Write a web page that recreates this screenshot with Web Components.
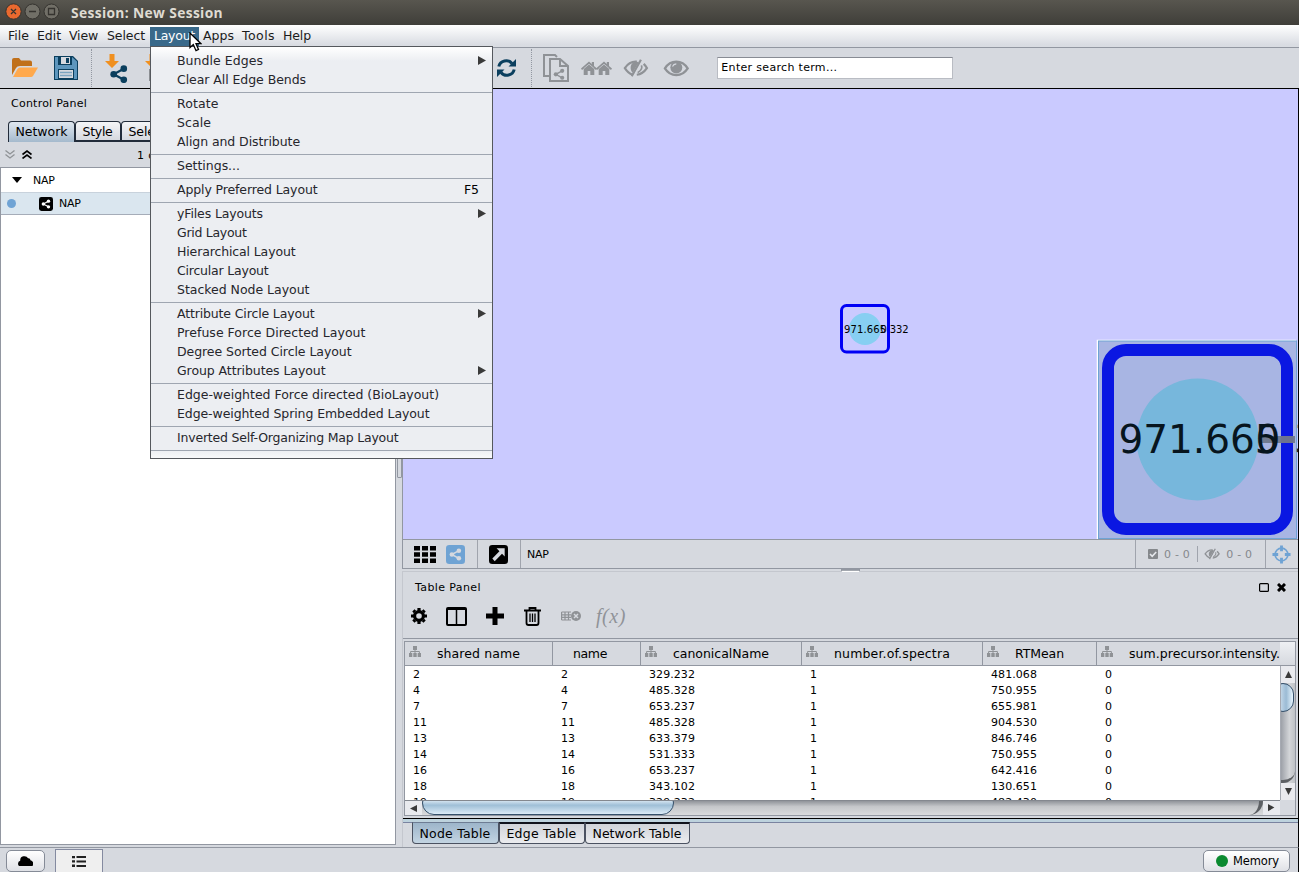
<!DOCTYPE html>
<html lang="en">
<head>
<meta charset="utf-8">
<title>Session: New Session</title>
<style>
html,body{margin:0;height:100%;overflow:hidden;background:#d6d9df}
body{font-family:"DejaVu Sans",sans-serif;font-size:12.5px;color:#000}
</style>
</head>
<body>
<session-app></session-app>
<script>
const define = (name, html, after) => customElements.define(name, class extends HTMLElement {
  connectedCallback() {
    if (!this.shadowRoot) {
      const t = document.createElement('template');
      t.innerHTML = typeof html === 'function' ? html(this) : html;
      this.attachShadow({mode: 'open'}).append(t.content.cloneNode(true));
    }
    if (after) after(this);
  }
});

/* Text label; w is the width its glyph run is spaced to. */
define('ui-text', '<style>:host{display:inline-block;white-space:pre;flex:none}span{display:inline-block}</style><span><slot></slot></span>', el => {
  const w = parseFloat(el.getAttribute('w'));
  const n = el.textContent.length || parseFloat(el.getAttribute('n'));
  const s = el.shadowRoot.querySelector('span');
  if (!w || !n) return;
  s.style.letterSpacing = (w - s.getBoundingClientRect().width) / n + 'px';
});

const SHARE = '<circle cx="4" cy="10" r="3.6"/><circle cx="15" cy="4" r="3.6"/><circle cx="15" cy="16" r="3.6"/><path d="M15 4L4 10l11 6" fill="none" stroke="currentColor" stroke-width="2.4"/>';
const ICONS = {
  folder: [26,20,'<path fill="#c0701a" d="M0 17V2Q0 0 2 0H7L9 2.500H18Q20 2.500 20 4.500V8H8Q5 8 4 10z"/><path fill="#ffa94d" d="M1 19L5.500 11Q6.500 9.500 8 9.500H26L21 18Q20.300 19 19 19z"/>'],
  save: [24,24,'<path fill="#0b3f5e" d="M0 0H19L24 5V24H0z"/><path fill="#5d96bd" d="M1 1H4V9H18V1L23 5.500V23H20V13H4V23H1z"/><path fill="#d6d9df" d="M7 1H16V8H7z"/><path fill="#0b3f5e" d="M12 2H15V7H12z"/><path fill="#d6d9df" d="M5 14H19V22H5z"/><path stroke="#7ba4c0" stroke-width="1.500" d="M6 16.500H18M6 19.500H18"/>'],
  import: [24,30,'<path fill="#f09020" d="M4.500 1H9.500V8H14L7 15L0 8H4.500z"/><g color="#0b3f5e" fill="#0b3f5e" transform="translate(5 12) scale(.92)">'+SHARE+'</g>'],
  table: [24,30,'<path fill="#f09020" d="M4.500 1H9.500V8H14L7 15L0 8H4.500z"/><path fill="#8b8e92" d="M4 16H20V28H4z"/>'],
  refresh: [19,18,'<path fill="none" stroke="#0b3f5e" stroke-width="3" d="M1.800 7.500A7.500 7.300 0 0 1 15 4.500M17.200 10.500A7.500 7.300 0 0 1 4 13.500"/><path fill="#0b3f5e" d="M19 0V7.500H11.500zM0 18V10.500H7.500z"/>'],
  pages: [26,28,'<g fill="#d6d9df" stroke="#8f9296" stroke-width="2"><path d="M6 22H1V1H12L14 3"/><path d="M7 5H17L25 12V27H7z"/><path d="M17 5V12H25" fill="none"/></g><g color="#8f9296" fill="#8f9296" transform="translate(10.500 14.500) scale(.58)">'+SHARE+'</g>'],
  homes: [31,14,'<g fill="#8f9296"><path id="h" d="M0 7.500L8 .5L10.800 3V1H13V5L16 7.500L15 9L13.300 7.700V14H9.300V10H6.700V14H2.700V7.700L1 9z"/><path d="M15 7.500L23 .5L25.800 3V1H28V5L31 7.500L30 9L28.300 7.700V14H24.300V10H21.700V14H17.700V7.700L16 9z"/></g><path d="M2.700 7.700L8 3.200L13.300 7.700M17.700 7.700L23 3.200L28.300 7.700" fill="none" stroke="#d6d9df" stroke-width=".7"/>'],
  eye: [28,24,'<path fill="none" stroke="#8f9296" stroke-width="2.400" d="M2 12C8 2.500 20 2.500 26 12C20 21.500 8 21.500 2 12z"/><circle cx="14" cy="11" r="6.300" fill="#8f9296"/><path d="M10 10Q11 7.500 14 7.300" fill="none" stroke="#d6d9df" stroke-width="1.200"/>'],
  eyeoff: [28,24,'<path fill="none" stroke="#8f9296" stroke-width="2.400" d="M15 5C9 4.500 5 7.500 2 12Q6 18 10 19M22.500 7.500Q24.500 9.500 26 12Q21.500 18.500 15 19.300"/><path fill="#8f9296" d="M15 5C7 5 7 15 10.500 17L17 6z"/><path stroke="#8f9296" stroke-width="2.400" d="M19.500 3L9.500 21"/><path stroke="#d6d9df" stroke-width="1.200" d="M21.500 4L12 21"/><path d="M20 9Q22 13 16 17" fill="none" stroke="#8f9296" stroke-width="1.800"/>'],
  grid: [22,17,'<path d="M0 0h6v4.600H0zM8 0h6v4.600H8zM16 0h6v4.600h-6zM0 6.200h6v4.600H0zM8 6.200h6v4.600H8zM16 6.200h6v4.600h-6zM0 12.400h6V17H0zM8 12.400h6V17H8zM16 12.400h6V17h-6z"/>'],
  sharebox: [20,20,'<rect width="20" height="20" rx="3.500"/><g color="var(--hole,#d6d9df)" fill="var(--hole,#d6d9df)" transform="translate(3.500 3.300) scale(.67)">'+SHARE+'</g>'],
  detach: [20,20,'<rect width="20" height="20" rx="3.500"/><path fill="#d6d9df" d="M8 3.500H16.500V12L13.700 9.200L6 17L3.500 14.300L11 6.500z"/>'],
  gear: [16,16,'<circle cx="8" cy="8" r="4.400" fill="none" stroke="#000" stroke-width="3.200"/><path stroke="#000" stroke-width="3.200" d="M8 0V3M8 13V16M0 8H3M13 8H16M2.400 2.400L4 4M12 12L13.600 13.600M2.400 13.600L4 12M12 4L13.600 2.400"/>'],
  cols: [21,19,'<rect x="1" y="1" width="19" height="17" rx="1" fill="none" stroke="#000" stroke-width="2"/><path stroke="#000" stroke-width="1.500" d="M1 2.200H20M10.500 2V18"/>'],
  plus: [18,18,'<path d="M6.500 0H11.500V6.500H18V11.500H11.500V18H6.500V11.500H0V6.500H6.500z"/>'],
  trash: [17,19,'<path fill="none" stroke="#000" stroke-width="1.800" d="M0 3.500H17M5.500 3V1H11.500V3M2.500 4V16Q2.500 18 4.500 18H12.500Q14.500 18 14.500 16V4"/><path stroke="#000" stroke-width="1.300" d="M6 6.500V15M8.500 6.500V15M11 6.500V15"/>'],
  deltab: [20,10,'<path fill="none" stroke="#8f9296" stroke-width="1.200" d="M.6 1H10M.6 3.800H10M.6 6.300H10M.6 9H10M.6 1V9M4 1V9M7.500 1V9"/><circle cx="15" cy="5" r="5" fill="#8f9296"/><path stroke="#d6d9df" stroke-width="1.500" d="M13 3L17 7M17 3L13 7"/>'],
  tree: [12,11,'<path fill="#8f9296" d="M4 0H8V4H4zM0 7H3.300V11H0zM4.300 7H7.700V11H4.300zM8.700 7H12V11H8.700z"/><path fill="none" stroke="#8f9296" d="M6 4V7M1.600 7V5.500H10.400V7"/>'],
  check: [10,10,'<rect width="10" height="10" rx="1" fill="#85888c"/><path d="M2 5L4.200 7.300L8.200 3" fill="none" stroke="#e6e8ec" stroke-width="1.600"/>'],
  target: [20,20,'<circle cx="10" cy="10" r="6.700" fill="none" stroke="#6fa3d4" stroke-width="1.800"/><path stroke="#6fa3d4" stroke-width="3" d="M10 .5V6.500M10 13.500V19.500M.5 10H6.500M13.500 10H19.500"/>'],
  max: [10,9,'<rect x=".6" y=".6" width="8.800" height="7.800" rx="1" fill="none" stroke="#000" stroke-width="1.200"/>'],
  close: [9,9,'<path stroke="#000" stroke-width="3" d="M1 1L8 8M8 1L1 8"/>'],
  cloud: [16,11,'<path d="M4 11Q0 11 0 8Q0 5.500 2.300 5Q2 1 5.500 .3Q9 -.4 10.500 2.300Q12.800 2 13 4.500Q16 5.500 16 8Q16 11 13 11z"/>'],
  list: [14,11,'<path fill="#222" d="M0 0H3V2.300H0zM0 4.300H3V6.600H0zM0 8.600H3V11H0zM4.500 0H14V2H4.500zM4.500 4.500H14V6.500H4.500zM4.500 9H14V11H4.500z"/>'],
  dn2: [10,9,'<path fill="none" stroke="#8f9296" stroke-width="1.300" d="M.5 .5L5 4L9.500 .5M.5 4.500L5 8L9.500 4.500"/>'],
  up2: [10,9,'<path fill="none" stroke="#000" stroke-width="1.600" d="M.5 4.500L5 1L9.500 4.500M.5 8.500L5 5L9.500 8.500"/>'],
  down: [10,6,'<path d="M0 0H10L5 6z"/>'],
  right: [8,9,'<path fill="#3a3a3a" d="M0 0L8 4.500L0 9z"/>'],
  left: [7,7,'<path fill="#3a3a3a" d="M7 0L0 3.500L7 7z"/>'],
  upt: [7,7,'<path fill="#3a3a3a" d="M0 7L3.500 0L7 7z"/>'],
  dnt: [7,7,'<path fill="#3a3a3a" d="M0 0L3.500 7L7 0z"/>'],
  cursor: [13,20,'<path fill="#fff" stroke="#000" stroke-width="1.300" d="M1 1V15.500L4.300 12.500L7 18.700L9.500 17.500L7 11.700H12z"/>']
};
define('ui-icon', el => {
  const [w, h, body] = ICONS[el.getAttribute('name')];
  const k = parseFloat(el.getAttribute('scale') || 1);
  return `<style>:host{display:block;flex:none;width:${w*k}px;height:${h*k}px}svg{display:block}</style><svg width="${w*k}" height="${h*k}" viewBox="0 0 ${w} ${h}" fill="currentColor">${body}</svg>`;
});

define('title-bar', `<style>
:host{display:flex;height:25px;align-items:center;background:linear-gradient(#58564f,#3f3e39);box-sizing:border-box;padding:0 5px;color:#dfdbd2;font:bold 13.800px "Open Sans","Noto Sans",sans-serif}
svg{display:block;flex:none}ui-text{margin-left:11px;padding-bottom:1px}</style>
<svg width="55" height="19"><g stroke="#35332f"><circle cx="8.500" cy="8.500" r="7.700" fill="#e9692f"/><circle cx="27.500" cy="8.500" r="7.500" fill="#716f67"/><circle cx="46.500" cy="8.500" r="7.500" fill="#716f67"/></g><path d="M6 6L11 11M11 6L6 11M24 8.500H31M43.500 5.500H49.500V11.500H43.500z" fill="none" stroke="#35332f" stroke-width="1.300"/></svg>
<ui-text w="152" n="20"><slot></slot></ui-text>`);

define('menu-bar', `<style>
:host{display:grid;grid-template-columns:29px 32px 38px 47px 49px 39px 41px 40px;padding:2px 0 1px 4px;height:23px;box-sizing:border-box;background:linear-gradient(#fff,#d9dce2 90%);border-bottom:1px solid #9297a1;line-height:17px;color:#1b1b1b}
</style><slot></slot>`);
define('menu-title', `<style>:host{padding-left:4px;white-space:nowrap}:host([active]){background:#39698a;color:#fff}</style><slot></slot>`);

define('main-toolbar', `<style>
:host{display:flex;height:41px;box-sizing:border-box;align-items:center;border-bottom:1px solid #000;padding-left:12px}
.sep{height:38px;border-left:1px dotted #9297a1}
.f{box-sizing:border-box;width:236px;height:22px;border:1px solid #b9bcc3;border-top:1.500px solid #888c94;background:#fff;margin-left:28px;padding-left:3px;font-size:11px;line-height:20px}
</style>
<ui-icon name="folder"></ui-icon><ui-icon name="save" style="margin-left:16px"></ui-icon><div class="sep" style="margin-left:13px"></div>
<ui-icon name="import" style="margin-left:13px"></ui-icon><ui-icon name="table" style="margin-left:16px"></ui-icon>
<ui-icon name="refresh" style="margin-left:328px"></ui-icon><div class="sep" style="margin-left:15px"></div>
<ui-icon name="pages" style="margin-left:11px"></ui-icon><ui-icon name="homes" style="margin-left:12px"></ui-icon>
<ui-icon name="eyeoff" scale=".92" style="margin-left:11px"></ui-icon><ui-icon name="eye" scale=".95" style="margin-left:14px"></ui-icon>
<div class="f"><ui-text w="116">Enter search term...</ui-text></div>`);

define('ui-tab', `<style>
:host{display:block;box-sizing:border-box;height:21px;border:1px solid #222c3a;border-bottom-width:2px;border-radius:4px 4px 0 0;background:linear-gradient(#f4f5f7,#d6d9df);padding-left:6.500px;line-height:20px;white-space:nowrap;flex:none}
:host([active]){border-bottom:0;background:linear-gradient(#dfe7ef,#a5bacd);height:21px}
:host([low]){border:1px solid #4b5261;border-top:2px solid #10121c;border-radius:0 0 4px 4px;background:linear-gradient(#d0d3d9,#ebecef);height:22px}
:host([low][active]){background:linear-gradient(#9db5ca,#c3d4e2);border-top:1px solid #6e7d94;line-height:22px}
</style><slot></slot>`);

define('control-panel', `<style>
:host{display:flex;flex-direction:column;width:396px;box-sizing:border-box}
.h{height:32px;line-height:29px;padding-left:11px;font-size:11px}
.t{display:flex;padding-left:8px;height:21px}
.b{display:flex;height:25px;align-items:center;font-size:11px;padding-left:5px}
.b ui-text{padding-top:1px}
.tree{flex:1;border:1px solid #9297a1;background:#fff;font-size:11px;margin-bottom:2px}
.r{display:flex;align-items:center;height:24px}
.r.s{height:23px;box-sizing:border-box;background:#dae6ef;border-bottom:1px solid #a5acb8;border-top:1px solid #c8d2dc}
.dot{width:9px;height:9px;border-radius:5px;background:#6fa3d4;margin:0 23px 0 6px}
</style>
<div class="h"><ui-text w="76">Control Panel</ui-text></div>
<div class="t"><ui-tab active style="width:67px"><ui-text w="52">Network</ui-text></ui-tab><ui-tab style="width:46px"><ui-text w="30">Style</ui-text></ui-tab><ui-tab style="width:53px"><ui-text w="38">Select</ui-text></ui-tab></div>
<div class="b"><ui-icon name="dn2"></ui-icon><ui-icon name="up2" style="margin-left:7px"></ui-icon><ui-text w="140" style="margin-left:105px">1 of 1 Network selected</ui-text></div>
<div class="tree"><div class="r"><ui-icon name="down" style="margin-left:11px"></ui-icon><ui-text w="21.500" style="margin-left:11px">NAP</ui-text></div>
<div class="r s"><div class="dot"></div><ui-icon name="sharebox" scale=".7" style="--hole:#fff"></ui-icon><ui-text w="21.500" style="margin-left:6px">NAP</ui-text></div></div>`);

define('network-view', `<style>
:host{display:block;height:450px;position:relative;background:#cacaff;overflow:hidden;font-size:10px}
svg{position:absolute;display:block}
.node{left:422px;top:211px}.eye{left:693px;top:250px}
</style>
<svg class="node" width="90" height="60" font-family="DejaVu Sans" font-size="10"><circle cx="40" cy="29" r="16" fill="#87cff2"/><rect x="16.500" y="5.500" width="47" height="46.500" rx="5" fill="none" stroke="#0000f5" stroke-width="3"/><text x="19" y="32.500" textLength="42">971.665</text><text x="55.500" y="32.500" textLength="28">0.332</text><path stroke="#0000f5" stroke-width="3" d="M63.500 22V36"/></svg>
<svg class="eye" width="202" height="200" font-family="DejaVu Sans" font-size="39"><path d="M1.500 200V1.500H200" fill="none" stroke="#fff" stroke-width="1.500"/><rect x="2.500" y="2" width="198" height="197.500" fill="#a8b5e3" stroke="#6fa3d4"/><circle cx="101.500" cy="100.500" r="61" fill="#77b7dc"/><path stroke="#727c92" stroke-width="7" d="M163 100.500H199"/><g fill="#07151e"><text x="22.500" y="114" textLength="161">971.665</text><text x="159.500" y="114" textLength="114">0.332</text></g><rect x="12" y="11" width="179" height="179" rx="18" fill="none" stroke="#0a17e2" stroke-width="12"/><path stroke="#6d7390" stroke-width="7" d="M185 100.500H197"/></svg>`);

define('view-status', `<style>
:host{display:flex;box-sizing:border-box;height:30px;border:1px solid #9297a1;border-right:0;align-items:stretch;font-size:11px}
div{display:flex;align-items:center;box-sizing:border-box;border-right:1px solid #a0a4ad}
</style>
<div style="width:75px;padding-left:11px"><ui-icon name="grid"></ui-icon><ui-icon name="sharebox" scale=".95" style="margin-left:10px;color:#6fa3d4"></ui-icon></div>
<div style="width:43px;padding-left:11px"><ui-icon name="detach" scale=".95"></ui-icon></div>
<div style="flex:1;padding-left:6px"><ui-text w="21.500">NAP</ui-text></div>
<div style="width:130px;padding-left:12px;color:#85888c"><ui-icon name="check"></ui-icon><ui-text w="26" style="margin-left:6px">0 - 0</ui-text><span style="height:16px;border-left:1px solid #a0a4ad;margin:0 6px 0 7px"></span><ui-icon name="eyeoff" scale=".58"></ui-icon><ui-text w="26" style="margin-left:6px">0 - 0</ui-text></div>
<div style="width:32px;padding-left:6px;border:0"><ui-icon name="target" scale=".95"></ui-icon></div>`);

const COLS = [['shared name',148,83,1],['name',88,34,0],['canonicalName',161,96,1],['number.of.spectra',181,116,1],['RTMean',114,49,1],['sum.precursor.intensity.',183,151,1]];
const ROWS = [['2','2','329.232','1','481.068','0'],['4','4','485.328','1','750.955','0'],['7','7','653.237','1','655.981','0'],['11','11','485.328','1','904.530','0'],['13','13','633.379','1','846.746','0'],['14','14','531.333','1','750.955','0'],['16','16','653.237','1','642.416','0'],['18','18','343.102','1','130.651','0'],['19','19','329.232','1','482.430','0']];
define('data-table', `<style>
:host{display:grid;box-sizing:border-box;margin:2px 2px 0 1px;border:1px solid #9297a1;height:175px;grid-template:24px 134px 15px/875px 1fr;overflow:hidden}
.g{display:grid;grid-template-columns:${COLS.map(c=>c[1]+'px').join(' ')}}
.head{border-bottom:1px solid #9297a1;box-sizing:border-box}
.head div{display:flex;align-items:center;box-sizing:border-box;border-right:1px solid #9297a1;padding-left:4px;overflow:hidden}
.head div:last-child{border:0}.head ui-icon{margin:0 16px 5px 0}.head .n{padding-left:20px}
.corner{background:linear-gradient(#eef0f3,#d6d9df);border-bottom:1px solid #9297a1}
.body{background:#fff;overflow:hidden;font-size:11px;line-height:16px;padding-top:1px}
.body span{padding-left:8px}.body .g{height:16px}
.v{display:flex;flex-direction:column;border-left:1px solid #a6aab2;box-sizing:border-box;background:linear-gradient(90deg,#9da1a8,#d3d5d8 60%,#bfc2c6);overflow:hidden}
.v i,.h i{display:flex;align-items:center;justify-content:center;background:#e9eaee;flex:none}
.v i{height:17px}.v b{display:block;width:22px;height:29px;margin-left:-9px;box-sizing:border-box;border:1.500px solid #35506b;border-radius:14px;background:linear-gradient(90deg,#fff,#a9c5dc 55%,#9bbbd4 66%,#e8f6ff)}
.v u{flex:1;border-bottom:3px solid #5d6064;border-radius:0 0 12px 0}
.h{display:flex;background:linear-gradient(#90949a,#c5c7ca 40%,#dadbdd);overflow:hidden;border-top:1px solid #84888f;box-sizing:border-box}
.h i{width:17px}.h b{display:block;box-sizing:border-box;width:252px;height:24px;margin-top:-10px;border:1.500px solid #35506b;border-radius:14px;background:linear-gradient(#e1edf7 35%,#9fbfd7 60%,#dcebf7)}
.h u{flex:1;border-right:4px solid #5d6064;border-radius:0 0 14px 0}
</style>
<div class="g head">${COLS.map(c=>`<div class="${c[3]?'':'n'}">${c[3]?'<ui-icon name="tree"></ui-icon>':''}<ui-text w="${c[2]}">${c[0]}</ui-text></div>`).join('')}</div><div class="corner"></div>
<div class="body">${ROWS.map(r=>`<div class="g">${r.map(x=>`<span><ui-text w="${x.length*7-(x.includes('.')?3:0)}">${x}</ui-text></span>`).join('')}</div>`).join('')}</div>
<div class="v"><i><ui-icon name="upt"></ui-icon></i><b></b><u></u><i><ui-icon name="dnt"></ui-icon></i></div>
<div class="h"><i><ui-icon name="left"></ui-icon></i><b></b><u></u><i><ui-icon name="right" scale=".8"></ui-icon></i></div><div></div>`);

define('table-panel', `<style>
:host{display:flex;flex-direction:column;flex:1;border-left:1px solid #c4c7ce;border-top:1px solid #c4c7ce;margin-top:2px}
.h{display:flex;align-items:center;height:31px;padding:0 12px;font-size:11px}
.tb{display:flex;align-items:center;height:36px;padding:0 0 9px 8px;border-bottom:1px solid #9297a1;box-sizing:border-box}
.fx{font:italic 20px "Liberation Serif",serif;color:#909398}
.line{margin-top:2px;border-top:1px solid #000;height:3px;background:#bdd2dd;border-bottom:1px solid #7a83a0}
.tabs{display:flex;padding-left:9px;margin-top:-1px}
</style>
<div class="h"><ui-text w="66">Table Panel</ui-text><span style="flex:1"></span><ui-icon name="max"></ui-icon><ui-icon name="close" style="margin-left:8px"></ui-icon></div>
<div class="tb"><ui-icon name="gear"></ui-icon><ui-icon name="cols" style="margin-left:19px"></ui-icon><ui-icon name="plus" style="margin-left:19px"></ui-icon><ui-icon name="trash" style="margin-left:20px"></ui-icon><ui-icon name="deltab" style="margin-left:20px"></ui-icon><ui-text class="fx" w="30" style="margin-left:15px">f(x)</ui-text></div>
<data-table></data-table><div class="line"></div>
<div class="tabs"><ui-tab low active style="width:87px"><ui-text w="71">Node Table</ui-text></ui-tab><ui-tab low style="width:86px"><ui-text w="70">Edge Table</ui-text></ui-tab><ui-tab low style="width:105px"><ui-text w="89">Network Table</ui-text></ui-tab></div>`);

define('status-bar', `<style>
:host{display:flex;height:25px;box-sizing:border-box;border-top:1px solid #9297a1;border-right:1px solid #000;padding:1px 8px 0 6px;overflow:hidden;font-size:11.500px}
.b{box-sizing:border-box;height:22px;margin-top:1px;border:1px solid #858b97;border-radius:5px;background:linear-gradient(#fff,#dfe1e6);display:flex;align-items:center}
.l{box-sizing:border-box;width:48px;height:30px;margin:0 0 0 10px;border:1px solid #848aa0;background:#efefef;padding:6px 16px}
.o{width:12px;height:12px;border-radius:6px;background:#0b8a30;margin:0 5px 0 12px}
</style>
<div class="b" style="width:39px;padding-left:11px"><ui-icon name="cloud" scale=".96"></ui-icon></div><div class="l"><ui-icon name="list"></ui-icon></div><span style="flex:1"></span>
<div class="b" style="width:87px"><span class="o"></span><ui-text w="46">Memory</ui-text></div>`);

define('popup-menu', `<style>:host{display:block;position:absolute;left:150px;top:46px;width:343px;height:413px;box-sizing:border-box;border:1px solid #55585d;padding-top:4px;background:linear-gradient(#fff,#eceef2 14px,#eceef2 403px,#f8f9fa);color:#26262c}</style><slot></slot>`);
define('menu-item', el => `<style>:host{display:flex;height:19px;line-height:18px;padding:0 6px 0 26px;align-items:center}span{flex:1}.k{margin-right:7px;color:#000}</style>
<ui-text w="${el.getAttribute('w')}">${el.textContent}</ui-text><span></span>${el.hasAttribute('key')?`<ui-text class="k" w="15">${el.getAttribute('key')}</ui-text>`:''}${el.hasAttribute('sub')?'<ui-icon name="right"></ui-icon>':''}`);
define('menu-separator', `<style>:host{display:block;height:5px;box-sizing:border-box;padding-top:3px}div{height:1px;background:#9fa6b1}</style><div></div>`);

const menu = [['Bundle Edges',86,1],['Clear All Edge Bends',129],0,['Rotate',41.5],['Scale',34],['Align and Distribute',123],0,['Settings...',63],0,['Apply Preferred Layout',140.5,0,'F5'],0,['yFiles Layouts',86,1],['Grid Layout',69.5],['Hierarchical Layout',118.5],['Circular Layout',91.5],['Stacked Node Layout',132.5],0,['Attribute Circle Layout',137.5,1],['Prefuse Force Directed Layout',188.5],['Degree Sorted Circle Layout',174.5],['Group Attributes Layout',148.5,1],0,['Edge-weighted Force directed (BioLayout)',262],['Edge-weighted Spring Embedded Layout',252.5],0,['Inverted Self-Organizing Map Layout',221.5],0];
const titles = [['File',21],['Edit',24],['View',29],['Select',38],['Layout',41],['Apps',31],['Tools',33],['Help',28]];

define('session-app', `<style>
:host{display:flex;flex-direction:column;width:1299px;height:872px;position:relative;overflow:hidden;background:#d6d9df}
main{display:flex;border-right:1px solid #000;box-sizing:border-box;height:758px}
.split{width:6px;display:flex;align-items:center;justify-content:flex-end}
.split i{width:3px;height:18px;border:1px solid #9297a1;border-radius:1px;background:#d6d9df}
.right{flex:1;min-width:0;display:flex;flex-direction:column}
network-view{border-left:1px solid #9297a1}
.main-col{position:relative}
.grip{position:absolute;left:439px;top:480px;width:17px;height:1px;border:1px solid #9297a1;border-bottom-color:#fff;background:#a4a8af}
ui-icon.cur{position:absolute;left:189px;top:32px}
</style>
<title-bar>Session: New Session</title-bar>
<menu-bar>${titles.map(([t,w])=>`<menu-title ${t==='Layout'?'active':''}><ui-text w="${w}">${t}</ui-text></menu-title>`).join('')}</menu-bar>
<main-toolbar></main-toolbar>
<main><control-panel></control-panel><div class="split"><i></i></div>
<div class="right main-col"><network-view></network-view><view-status></view-status><table-panel></table-panel><div class="grip"></div></div></main>
<status-bar></status-bar>
<popup-menu>${menu.map(m=>m?`<menu-item w="${m[1]}" ${m[2]?'sub':''} ${m[3]?`key="${m[3]}"`:''}>${m[0]}</menu-item>`:'<menu-separator></menu-separator>').join('')}</popup-menu>
<ui-icon class="cur" name="cursor"></ui-icon>`);
</script>
</body>
</html>
